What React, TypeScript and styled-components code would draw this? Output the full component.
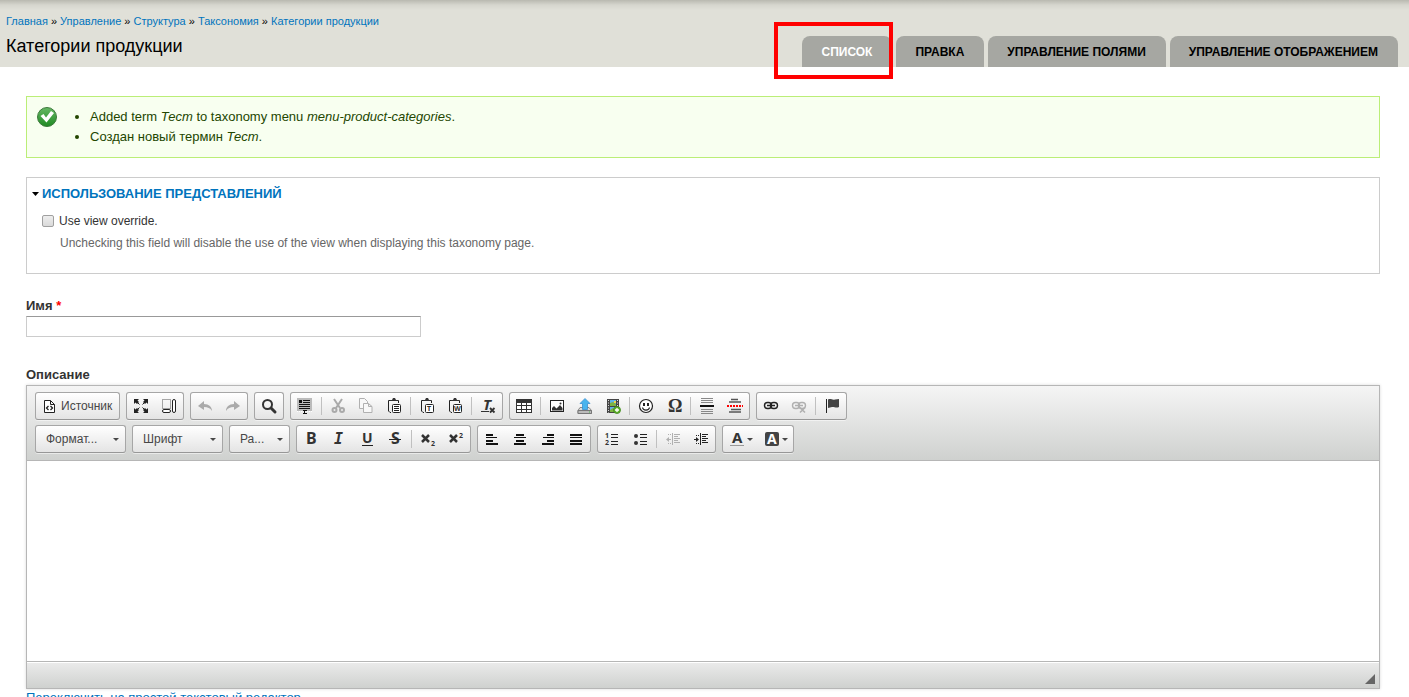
import React from "react";
import styled, { createGlobalStyle, css } from "styled-components";

const Global = createGlobalStyle`
  *, *::before, *::after { box-sizing: border-box; }
  body {
    margin: 0;
    background: #fff;
    color: #333;
    font-family: "Liberation Sans", Arial, sans-serif;
    font-size: 13px;
    line-height: 20px;
  }
  a { color: #0074bd; text-decoration: none; }
`;

/* ---------- page header ---------- */

const Header = styled.header`
  display: flex;
  justify-content: space-between;
  align-items: flex-end;
  min-height: 67px;
  padding: 0 11px 0 6px;
  background: linear-gradient(#b9b9b0, #d6d6ce 5px, #e0e0d8 10px);
`;

const Heading = styled.div`
  padding-bottom: 9px;
`;

const Breadcrumb = styled.nav`
  font-size: 11px;
  line-height: 14px;
  color: #000;
`;

const Title = styled.h1`
  margin: 6px 0 0;
  font-size: 18px;
  line-height: 24px;
  font-weight: normal;
  color: #000;
`;

const Tabs = styled.ul`
  display: flex;
  gap: 4px;
  margin: 0;
  padding: 0;
  list-style: none;
`;

const TabItem = styled.li`
  position: relative;
`;

const Tab = styled.a<{ $active?: boolean }>`
  display: block;
  padding: 1px 20px 0 19px;
  border-radius: 8px 8px 0 0;
  background: #a6a7a2;
  color: ${(p) => (p.$active ? "#fff" : "#000")};
  font-size: 12px;
  line-height: 30px;
  font-weight: bold;
  text-transform: uppercase;
`;

const Highlight = styled.span`
  position: absolute;
  inset: -14px -1px -12px -28px;
  border: 4px solid #f00;
  pointer-events: none;
`;

/* ---------- content ---------- */

const Main = styled.main`
  padding: 29px 29px 0 26px;
`;

const Status = styled.div`
  display: flex;
  align-items: flex-start;
  padding: 10px;
  border: 1px solid #be7;
  background: #f8fff0;
  color: #234600;
`;

const StatusList = styled.ul`
  margin: 0 0 0 33px;
  padding: 0;
`;

const Fieldset = styled.section`
  margin-top: 19px;
  padding: 6px 15px 21px;
  border: 1px solid #ccc;
`;

const Legend = styled.h2`
  display: flex;
  align-items: center;
  gap: 3px;
  margin: 0 0 8px -10px;
  font-size: 13px;
  line-height: 20px;
  font-weight: bold;
  text-transform: uppercase;
`;

const CheckRow = styled.div`
  display: flex;
  align-items: center;
  gap: 5px;
  font-size: 12px;
  line-height: 18px;
`;

const Checkbox = styled.input`
  appearance: none;
  width: 12px;
  height: 12px;
  margin: 0;
  border: 1px solid #a0a0a0;
  border-radius: 2px;
  background: linear-gradient(#eee, #dadada);
`;

const Hint = styled.p`
  margin: 4px 0 0 18px;
  font-size: 12px;
  line-height: 18px;
  color: #666;
`;

const Field = styled.div`
  margin: 22px 0 28px;
`;

const Label = styled.label`
  display: block;
  font-weight: bold;
`;

const Required = styled.span`
  color: #f00;
`;

const TextInput = styled.input`
  display: block;
  width: 395px;
  max-width: 100%;
  height: 21px;
  padding: 2px;
  border: 1px solid #ccc;
  border-top-color: #999;
  font: inherit;
`;

/* ---------- rich text editor ---------- */

const Editor = styled.div`
  border: 1px solid #b6b6b6;
  box-shadow: 0 0 3px rgba(0, 0, 0, 0.15);
`;

const ToolArea = styled.div`
  display: flex;
  flex-direction: column;
  gap: 5px;
  padding: 6px 8px 7px;
  border-bottom: 1px solid #b6b6b6;
  background: linear-gradient(#f5f5f5, #cfd1cf);
`;

const ToolRow = styled.div`
  display: flex;
  flex-wrap: wrap;
  gap: 5px 6px;
`;

const frame = css`
  height: 28px;
  border: 1px solid #a6a6a6;
  border-bottom-color: #979797;
  border-radius: 3px;
  background: linear-gradient(#fff, #e4e4e4);
  box-shadow: 0 1px 0 rgba(255, 255, 255, 0.5);
`;

const Group = styled.div`
  ${frame}
  display: flex;
`;

const ToolButton = styled.button`
  display: flex;
  align-items: center;
  gap: 3px;
  height: 26px;
  padding: 0 6px;
  border: 0;
  background: none;
  color: #474747;
  font-family: inherit;
  font-size: 12px;
  line-height: 16px;
`;

const SourceButton = styled(ToolButton)`
  min-width: 83px;
`;

const ColorButton = styled(ToolButton)`
  gap: 2px;
  padding-right: 5px;
`;

const Separator = styled.span`
  width: 1px;
  height: 18px;
  margin: 4px 2px 0;
  background: #c0c0c0;
`;

const Combo = styled.div<{ $wide?: boolean }>`
  ${frame}
  display: grid;
  align-items: center;
  width: ${(p) => (p.$wide ? "91px" : "61px")};

  > * { grid-area: 1 / 1; }
  > svg { justify-self: end; margin-right: 6px; pointer-events: none; }
`;

const Select = styled.select`
  appearance: none;
  width: 100%;
  height: 26px;
  padding: 0 16px 0 10px;
  border: 0;
  background: none;
  color: #474747;
  font-family: inherit;
  font-size: 12px;
`;

const Body = styled.textarea`
  display: block;
  width: 100%;
  height: 200px;
  padding: 20px;
  border: 0;
  resize: none;
  font: inherit;
`;

const Bottom = styled.div`
  display: flex;
  justify-content: flex-end;
  align-items: flex-end;
  height: 27px;
  padding: 4px;
  border-top: 1px solid #b6b6b6;
  box-shadow: inset 0 1px 0 #fff;
  background: linear-gradient(#ebebeb, #cfd1cf);
`;

const SwitchLink = styled.a`
  display: block;
  line-height: 18px;
`;

/* ---------- icons ---------- */

const Glyph = styled.svg`
  display: block;
  flex: none;
  overflow: visible;
`;

const Caret = () => (
  <Glyph width="6" height="3" viewBox="0 0 6 3"><path d="M0 0h6L3 3z" fill="#474747" /></Glyph>
);

const letter = { fontFamily: "Noto Sans, sans-serif", fontWeight: 700, fill: "#333" };
const arrow = "M1 6l6-5v3c5 0 8 3 8 7-2-3-4-4-8-4v3z";
const clipboard = (
  <>
    <path d="M4 2.500H2.500V13L4 14.500H5M11 2.500h1.500V5" fill="none" stroke="#222" />
    <path d="M4 2h2l1-2h2l1 2h2v1H4z" fill="#333" />
    <rect x="6.500" y="6.500" width="8" height="8" rx="1" fill="#fff" stroke="#222" />
  </>
);
const chain = (
  <g fill="none">
    <rect x="1.500" y="4.500" width="7" height="6" rx="3" />
    <rect x="7.500" y="4.500" width="7" height="6" rx="3" />
    <path d="M4 7.500h8" strokeWidth="1.500" />
  </g>
);

const icons: Record<string, React.ReactNode> = {
  source: (
    <g fill="none" stroke="#222">
      <path d="M2.500 2.500h6l4 4v8h-10zM8.500 2.500v4h4" fill="#fff" />
      <path d="M6.500 8L4.500 10l2 2M8.500 8l2 2-2 2" strokeWidth="1.300" />
    </g>
  ),
  maximize: (
    <g fill="#222" stroke="#222">
      <path d="M1 1h5L4.500 2.500 6 4 4 6 2.500 4.500 1 6zM15 1v5l-1.500-1.500L12 6l-2-2 1.500-1.500L10 1zM1 15v-5l1.500 1.500L4 10l2 2-1.500 1.500L6 15zM15 15h-5l1.500-1.500L10 12l2-2 1.500 1.500L15 10z" stroke="none" />
      <path d="M4 4l2.500 2.500M12 4L9.500 6.500M4 12l2.500-2.500M12 12L9.500 9.500" />
    </g>
  ),
  blocks: (
    <g fill="none" stroke="#222">
      <rect x="1.500" y="1.500" width="8" height="9" stroke="#555" strokeDasharray="1 1" />
      <rect x="1.500" y="11.500" width="8" height="3" rx="1.500" fill="#fff" />
      <rect x="11.500" y="1.500" width="3" height="13" rx="1.500" fill="#fff" />
    </g>
  ),
  undo: <path d={arrow} fill="#aaa" transform="translate(0 2)" />,
  redo: <path d={arrow} fill="#aaa" transform="matrix(-1 0 0 1 16 2)" />,
  find: (
    <g fill="none" stroke="#333">
      <circle cx="6.500" cy="6.500" r="4.500" strokeWidth="2" />
      <path d="M10 10l4 4" strokeWidth="3" strokeLinecap="round" />
    </g>
  ),
  selectAll: (
    <>
      <path d="M0 0h15v13H0z" fill="#bbb" />
      <path d="M2 2h3v3H2zM6 2h7v1H6zM6 4h7v1H6zM2 6h11v1H2zM2 8h11v1H2zM2 10h11v1H2zM6 12h4v1H6zM7 13h1v3H7zM6 15h4v1H6z" fill="#111" />
      <path d="M0 13.500h5M10 13.500h5" stroke="#fff" strokeDasharray="1 1" />
    </>
  ),
  cut: (
    <g fill="none" stroke="#aaa" strokeWidth="2">
      <path d="M4 1l6 9M12 1L6 10" />
      <circle cx="4.500" cy="12" r="2" />
      <circle cx="12" cy="12" r="2" />
    </g>
  ),
  copy: (
    <g fill="#f8f8f8" stroke="#b0b0b0">
      <path d="M1.500.5h5l3 3v7h-8z" />
      <path d="M5.500 5.500h5l3.500 3v6H5.500zM10.500 5.500v3H14" />
    </g>
  ),
  paste: <>{clipboard}<path d="M8 8.500h5M8 10.500h5M8 12.500h5" stroke="#222" /></>,
  pasteText: <>{clipboard}<text x="8" y="13" fontSize="7" {...letter}>T</text></>,
  pasteWord: <>{clipboard}<text x="7" y="13" fontSize="7" {...letter}>W</text></>,
  removeFormat: (
    <>
      <text x="3" y="12" fontSize="15" fontStyle="italic" {...letter}>T</text>
      <path d="M1 13.500h8" stroke="#333" />
      <path d="M10 10l4.500 4.500M14.500 10L10 14.500" stroke="#333" strokeWidth="1.800" />
    </>
  ),
  table: (
    <>
      <path d="M0 1h16v14H0z" fill="#333" />
      <path d="M1 5h4v2H1zM6 5h4v2H6zM11 5h4v2h-4zM1 8h4v3H1zM6 8h4v3H6zM11 8h4v3h-4zM1 12h4v2H1zM6 12h4v2H6zM11 12h4v2h-4z" fill="#fff" />
    </>
  ),
  image: (
    <>
      <rect x="1.500" y="2.500" width="13" height="11" fill="#fff" stroke="#222" />
      <path d="M3 12.500V10l2-2 2.500 2.500L11 7l2.500 3v2.500z" fill="#333" />
      <circle cx="11.500" cy="5.500" r="1" fill="#333" />
    </>
  ),
  upload: (
    <>
      <path d="M3 9.500h9l2.500 3v3H1v-3z" fill="#ddd" stroke="#888" />
      <path d="M1 12.500h13.500v3H1z" fill="#bbb" stroke="#777" />
      <path d="M12 14h1" stroke="#4b4" />
      <path d="M8 .500l5 5h-2.500v6h-5v-6H3z" fill="#49b4ee" stroke="#3a8fd0" strokeWidth=".8" />
    </>
  ),
  video: (
    <>
      <path d="M2 1h12v14H2z" fill="#444" />
      <path d="M5 2h6v6H5zM5 9h6v5H5z" fill="#5fb4e8" />
      <path d="M5 5l3-1 3 2v2H5zM5 12l3-2 3 2v2H5z" fill="#7cb342" />
      <path d="M9 3h2v2H9z" fill="#f5d547" />
      <path d="M3.500 2v13M12.500 2v8" stroke="#ddd" strokeDasharray="1 1.500" />
      <circle cx="12" cy="12" r="3.500" fill="#5fae2c" stroke="#3f8a1a" strokeWidth=".8" />
      <path d="M12 10v4M10 12h4" stroke="#fff" strokeWidth="1.300" />
    </>
  ),
  smiley: (
    <>
      <circle cx="8" cy="8" r="6.500" fill="#fff" stroke="#222" strokeWidth="1.200" />
      <path d="M5 5h2v3H5zM9 5h2v3H9z" fill="#222" />
      <path d="M4.500 9.500C5 13 11 13 11.500 9.500" fill="none" stroke="#222" strokeWidth="1.200" />
    </>
  ),
  omega: <text x="2" y="14" fontSize="18" {...letter} fontFamily="Liberation Serif, serif">Ω</text>,
  rule: (
    <>
      <path d="M2 .500h12M2 2.500h12M2 4.500h12M2 11.500h12M2 13.500h12M2 15.500h12" stroke="#888" />
      <path d="M1 7h14v2H1z" fill="#111" />
    </>
  ),
  pageBreak: (
    <>
      <path d="M4 1.500h7M2 4h12M4 11.500h10M2 14h12" stroke="#555" strokeWidth="1.500" />
      <path d="M0 8h16" stroke="#f00" strokeWidth="2" strokeDasharray="2 1" />
    </>
  ),
  link: <g stroke="#222" strokeWidth="1.400">{chain}</g>,
  unlink: (
    <g stroke="#b0b0b0" strokeWidth="1.400">
      {chain}
      <path d="M9 9.500l5 5M14 9.500l-5 5" strokeWidth="1.600" />
    </g>
  ),
  anchor: (
    <>
      <path d="M2.500 1v14" stroke="#222" />
      <path d="M4 1.500c3-1.500 4 1 7 0l4-.5v8c-3 1.500-5-.5-7 0l-4 1z" fill="#444" />
    </>
  ),
  bold: <text x="3" y="13" fontSize="16" {...letter}>B</text>,
  italic: <text x="3" y="13" fontSize="15" fontStyle="italic" {...letter} fontFamily="DejaVu Sans Mono, monospace">I</text>,
  underline: (
    <>
      <text x="3" y="12" fontSize="14" {...letter}>U</text>
      <path d="M3 14.500h11" stroke="#222" />
    </>
  ),
  strike: (
    <>
      <text x="4" y="13" fontSize="16" {...letter}>S</text>
      <path d="M2 8.500h12" stroke="#222" />
    </>
  ),
  sub: (
    <>
      <path d="M2 4l7 7M9 4l-7 7" stroke="#333" strokeWidth="2.500" />
      <text x="11" y="15" fontSize="7" {...letter}>2</text>
    </>
  ),
  sup: (
    <>
      <path d="M2 4l7 7M9 4l-7 7" stroke="#333" strokeWidth="2.500" />
      <text x="11" y="7" fontSize="7" {...letter}>2</text>
    </>
  ),
  left: <path d="M2 3h7v2H2zM2 6h11v1H2zM2 9h7v2H2zM2 12h12v2H2z" fill="#111" />,
  center: <path d="M4 3h8v2H4zM2 6h12v1H2zM4 9h8v2H4zM2 12h12v2H2z" fill="#111" />,
  right: <path d="M7 3h7v2H7zM3 6h11v1H3zM7 9h7v2H7zM2 12h12v2H2z" fill="#111" />,
  justify: <path d="M2 3h12v2H2zM2 6h12v1H2zM2 9h12v2H2zM2 12h12v2H2z" fill="#111" />,
  numbered: (
    <>
      <path d="M7 3.500h7M7 6.500h7M7 10.500h7M7 13.500h7" stroke="#222" />
      <text x="1" y="7" fontSize="7" {...letter}>1</text>
      <text x="1" y="14" fontSize="7" {...letter}>2</text>
    </>
  ),
  bulleted: (
    <>
      <path d="M8 3.500h7M8 6.500h7M8 10.500h7M8 13.500h7" stroke="#222" />
      <circle cx="4" cy="5" r="2" fill="#333" />
      <circle cx="4" cy="12" r="2" fill="#333" />
    </>
  ),
  outdent: (
    <g stroke="#b0b0b0" fill="#b0b0b0">
      <path d="M7.500 2v12M9 3.500h6M9 5.500h4M9 7.500h6M9 9.500h4M9 11.500h6M3 8.500h3" />
      <path d="M3 3.500h3M3 12.500h3" strokeDasharray="1 1" />
      <path d="M1 8.500l3-2.500v5z" stroke="none" />
    </g>
  ),
  indent: (
    <g stroke="#222" fill="#222">
      <path d="M7.500 2v12M9 3.500h6M9 5.500h4M9 7.500h6M9 9.500h4M9 11.500h6M1 8.500h3" />
      <path d="M3 4.500h3M3 12.500h3" strokeDasharray="1 1" />
      <path d="M6 8.500L3 6v5z" stroke="none" />
    </g>
  ),
  textColor: (
    <>
      <text x="3" y="12" fontSize="15" {...letter}>A</text>
      <path d="M1 14.500h14" stroke="#999" />
    </>
  ),
  bgColor: (
    <>
      <rect x="1" y="1" width="14" height="14" rx="2" fill="#444" />
      <text x="3" y="13" fontSize="14" {...letter} fill="#fff">A</text>
    </>
  ),
};

const Tool = ({ icon, title }: { icon: string; title: string }) => (
  <ToolButton type="button" aria-label={title}>
    <Glyph width="16" height="16" viewBox="0 0 16 16">{icons[icon]}</Glyph>
  </ToolButton>
);

const ColorTool = ({ icon, title }: { icon: string; title: string }) => (
  <ColorButton type="button" aria-label={title}>
    <Glyph width="16" height="16" viewBox="0 0 16 16">{icons[icon]}</Glyph>
    <Caret />
  </ColorButton>
);

/* Each entry is an icon and its name; null stands for a separator. */
type Entry = [string, string] | null;

const topGroups: Entry[][] = [
  [["maximize", "Развернуть"], ["blocks", "Отображать блоки"]],
  [["undo", "Отменить"], ["redo", "Повторить"]],
  [["find", "Найти"]],
  [
    ["selectAll", "Выделить все"], null,
    ["cut", "Вырезать"], ["copy", "Копировать"], ["paste", "Вставить"], null,
    ["pasteText", "Вставить текст"], ["pasteWord", "Вставить из Word"], null,
    ["removeFormat", "Убрать форматирование"],
  ],
  [
    ["table", "Таблица"], null,
    ["image", "Изображение"], ["upload", "Загрузить"], ["video", "Видео"], null,
    ["smiley", "Смайлы"], ["omega", "Специальный символ"], null,
    ["rule", "Горизонтальная линия"], ["pageBreak", "Разрыв страницы"],
  ],
  [["link", "Ссылка"], ["unlink", "Убрать ссылку"], null, ["anchor", "Якорь"]],
];

const bottomGroups: Entry[][] = [
  [
    ["bold", "Полужирный"], ["italic", "Курсив"], ["underline", "Подчеркнутый"], ["strike", "Зачеркнутый"], null,
    ["sub", "Подстрочный индекс"], ["sup", "Надстрочный индекс"],
  ],
  [["left", "По левому краю"], ["center", "По центру"], ["right", "По правому краю"], ["justify", "По ширине"]],
  [["numbered", "Нумерованный список"], ["bulleted", "Маркированный список"], null, ["outdent", "Уменьшить отступ"], ["indent", "Увеличить отступ"]],
];

const ToolGroup = ({ entries }: { entries: Entry[] }) => (
  <Group>
    {entries.map((e, i) => (e ? <Tool key={i} icon={e[0]} title={e[1]} /> : <Separator key={i} />))}
  </Group>
);

const FormatCombo = ({ label, wide }: { label: string; wide?: boolean }) => (
  <Combo $wide={wide}>
    <Select aria-label={label}><option>{label}</option></Select>
    <Caret />
  </Combo>
);

const crumbs = ["Главная", "Управление", "Структура", "Таксономия", "Категории продукции"];
const tabs = ["Список", "Правка", "Управление полями", "Управление отображением"];

export default function App() {
  return (
    <>
      <Global />
      <Header>
        <Heading>
          <Breadcrumb>
            {crumbs.map((c, i) => (
              <React.Fragment key={c}>
                {i > 0 && " » "}
                <a href="#">{c}</a>
              </React.Fragment>
            ))}
          </Breadcrumb>
          <Title>Категории продукции</Title>
        </Heading>
        <Tabs>
          {tabs.map((t, i) => (
            <TabItem key={t}>
              <Tab href="#" $active={i === 0}>{t}</Tab>
              {i === 0 && <Highlight />}
            </TabItem>
          ))}
        </Tabs>
      </Header>

      <Main>
        <Status role="status">
          <Glyph width="20" height="20" viewBox="0 0 20 20">
            <defs>
              <linearGradient id="ok" x1="0" y1="0" x2="0" y2="1">
                <stop offset="0" stopColor="#66b865" />
                <stop offset="1" stopColor="#1f8a22" />
              </linearGradient>
            </defs>
            <circle cx="10" cy="10" r="9.500" fill="url(#ok)" stroke="#3d7a3c" />
            <path d="M3.500 9L6.500 7l2.500 3.500L14 4l3 2-7.500 9.500z" fill="#fff" />
          </Glyph>
          <StatusList>
            <li>Added term <em>Тест</em> to taxonomy menu <em>menu-product-categories</em>.</li>
            <li>Создан новый термин <em>Тест</em>.</li>
          </StatusList>
        </Status>

        <Fieldset>
          <Legend>
            <Glyph width="7" height="4" viewBox="0 0 7 4"><path d="M0 0h7L3.500 4z" fill="#000" /></Glyph>
            <a href="#">Использование представлений</a>
          </Legend>
          <CheckRow>
            <Checkbox type="checkbox" id="override" />
            <label htmlFor="override">Use view override.</label>
          </CheckRow>
          <Hint>Unchecking this field will disable the use of the view when displaying this taxonomy page.</Hint>
        </Fieldset>

        <Field>
          <Label htmlFor="name">Имя <Required>*</Required></Label>
          <TextInput id="name" type="text" />
        </Field>

        <Field>
          <Label htmlFor="description">Описание</Label>
          <Editor>
            <ToolArea>
              <ToolRow>
                <Group>
                  <SourceButton type="button">
                    <Glyph width="16" height="16" viewBox="0 0 16 16">{icons.source}</Glyph>
                    Источник
                  </SourceButton>
                </Group>
                {topGroups.map((g, i) => <ToolGroup key={i} entries={g} />)}
              </ToolRow>
              <ToolRow>
                <FormatCombo label="Формат..." wide />
                <FormatCombo label="Шрифт" wide />
                <FormatCombo label="Ра..." />
                {bottomGroups.map((g, i) => <ToolGroup key={i} entries={g} />)}
                <Group>
                  <ColorTool icon="textColor" title="Цвет текста" />
                  <ColorTool icon="bgColor" title="Цвет фона" />
                </Group>
              </ToolRow>
            </ToolArea>
            <Body id="description" />
            <Bottom>
              <Glyph width="10" height="10" viewBox="0 0 10 10"><path d="M10 0v10H0z" fill="#666" /></Glyph>
            </Bottom>
          </Editor>
          <SwitchLink href="#">Переключить на простой текстовый редактор</SwitchLink>
        </Field>
      </Main>
    </>
  );
}
